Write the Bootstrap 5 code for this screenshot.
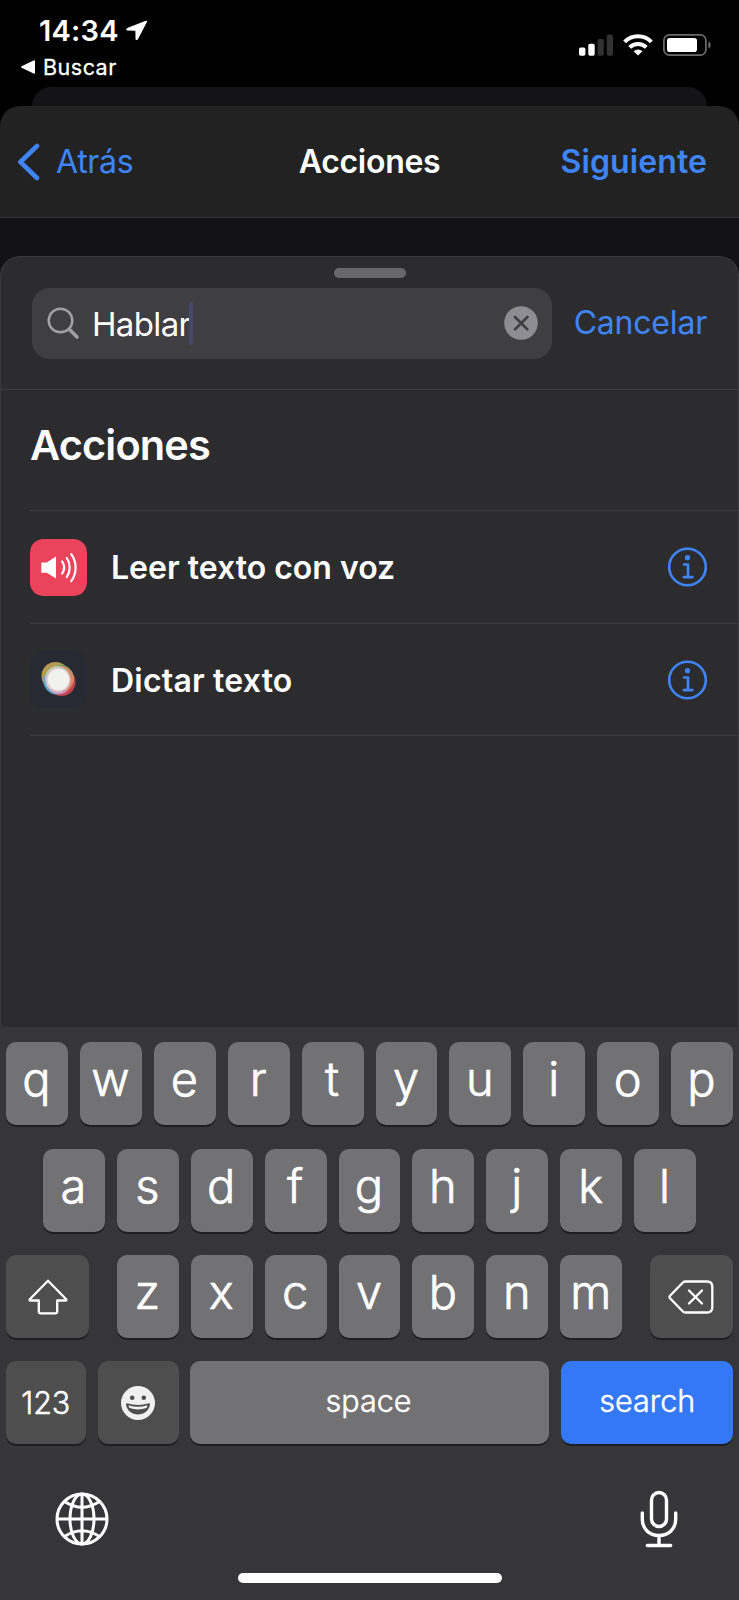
<!DOCTYPE html>
<html lang="es" data-bs-theme="dark">
<head>
<meta charset="utf-8">
<meta name="viewport" content="width=device-width, initial-scale=1">
<title>Acciones</title>
<link rel="stylesheet" href="https://cdn.jsdelivr.net/npm/bootstrap@5.3.0/dist/css/bootstrap.min.css">
<style>
body{background:#000;color:#fff;font-family:Inter,"Liberation Sans",sans-serif;line-height:1}
.phone{width:739px;height:1600px;overflow:hidden}
svg{display:block;flex:none}
.blue{color:#3f85f6}
.statusbar{height:87px;padding:16px 28px 0 21px}
.clock{font-size:29px;font-weight:600;line-height:30px;padding-left:18px;gap:7px;letter-spacing:.25px}
.return-app{font-size:21.500px;font-weight:400;line-height:26px;margin-top:8px;gap:8px;letter-spacing:.5px;-webkit-text-stroke:.3px #fff}
.signals{padding-top:18px;gap:10px}
.sheet-behind{height:19px;margin:0 32px;background:#141416;border-radius:20px 20px 0 0}
.topnav{height:112px;background:#222223;border-bottom:1px solid #363638;border-radius:20px 20px 0 0;padding:2px 32px 0 17px;font-size:32px}
.topnav .back-label{margin-left:15px;letter-spacing:-.3px}
.topnav .title{letter-spacing:-.3px}
.topnav .next{letter-spacing:.1px}
.shade{background:#121214;padding-top:38px}
.sheet{height:771px;background:#2c2c2e;border:1px solid #3b3b3d;border-bottom:0;border-radius:20px 20px 0 0}
.grabber{width:72px;height:10px;border-radius:5px;background:#68686c;margin:11px auto 10px}
.searchrow{height:102.500px;padding:0 31px;border-bottom:1px solid #3d3d3f}
.field{width:520px;height:71px;border-radius:18px;background:#3f3e43;padding:0 14px 0 15px;font-size:33px}
.query{margin-left:12px;letter-spacing:-.65px;padding-top:2px}
.caret{width:4px;height:43px;border-radius:2px;background:#434a6e;margin-left:-1px}
.cancel{font-size:32px;line-height:70px;letter-spacing:-.2px}
.section-title{height:120px;padding:27px 29px 0;font-size:41.500px;font-weight:600;line-height:56px;margin:0;letter-spacing:-.85px}
.actions{margin-left:29px}
.action{height:112.5px;border-top:1px solid #3d3d3f;padding:1px 30px 0 0;font-size:32px;font-weight:600}
.action span{padding-top:2px}
.actions .action:last-child{border-bottom:1px solid #3d3d3f;height:113.5px;letter-spacing:.2px}
.tile{width:57px;height:57px;border-radius:13px;margin-right:24px}
.keyboard{height:574px;background:#363638;padding:15.500px 6px 0}
.keyrow{height:83px;margin-bottom:23.4px;gap:12px}
.key{width:61.9px;height:83px;border-radius:10px;background:#727274;box-shadow:0 2px 0 #1e1e20;font-size:47px;font-weight:300;padding:0 1px 10px 0;-webkit-text-stroke:.7px #fff}
.key.mod{background:#4e4e4e;padding:0}
.key.txt{font-size:30.500px;font-weight:300;padding-bottom:4px;-webkit-text-stroke:.5px #fff}
.key.mod.txt{padding-bottom:0}
.key.txt.go{background:#3478f6;padding-left:2px}
.home{width:264px;height:10px;border-radius:5px;background:#fff;margin:25px auto 0}
</style>
<script src="https://cdn.jsdelivr.net/npm/bootstrap@5.3.0/dist/js/bootstrap.bundle.min.js"></script>
</head>
<body>
<main class="phone d-flex flex-column">
  <header class="statusbar d-flex justify-content-between align-items-start">
    <div>
      <div class="clock d-flex align-items-center"><span>14:34</span>
        <svg width="22" height="22" viewBox="0 0 22 22" fill="#fff"><path d="M19.800.8 1.300 8c-1.500.7-1.300 2.600.3 2.600l7.800.1.100 8c0 1.700 2 1.900 2.600.3L20.900 2c.3-.8-.3-1.500-1.100-1.200z"/></svg>
      </div>
      <div class="return-app d-flex align-items-center">
        <svg width="14" height="14" viewBox="0 0 14 14" fill="#fff"><path d="M.6 6.300 12.600.4c.7-.3 1.400 0 1.400.7v11.800c0 .7-.7 1-1.400.7L.6 7.700c-.7-.4-.7-1 0-1.400z"/></svg>
        <span>Buscar</span></div>
    </div>
    <div class="signals d-flex align-items-center">
      <svg width="34" height="22" viewBox="0 0 34 22"><g fill="#fff"><rect x="0" y="13.500" width="6.400" height="8.300" rx="1.700"/><rect x="9.300" y="9.800" width="6.400" height="12" rx="1.700"/></g><g fill="#323232"><rect x="18.600" y="5" width="6.200" height="16.800" rx="1.700"/><rect x="27.800" y=".6" width="6.200" height="21.200" rx="1.700"/></g></svg>
      <svg width="30" height="22" viewBox="0 0 30 22" fill="none" stroke="#fff" stroke-width="4"><path d="M1.600 7.900a19 19 0 0 1 26.800 0"/><path d="M6.700 13.400a11.700 11.700 0 0 1 16.600 0"/><path d="M15 21.600 10.600 17.300a6.200 6.200 0 0 1 8.800 0z" fill="#fff" stroke="none"/></svg>
      <svg width="48" height="22" viewBox="0 0 48 22"><rect x=".9" y=".9" width="42" height="20.200" rx="5.500" fill="none" stroke="#6b6b6b" stroke-width="1.700"/><rect x="4" y="4" width="30" height="14" rx="2.800" fill="#fff"/><path d="M45.300 7.400c3.200 1.300 3.200 6 0 7.200z" fill="#6b6b6b"/></svg>
    </div>
  </header>
  <div class="sheet-behind"></div>
  <nav class="topnav d-flex align-items-center justify-content-between position-relative">
    <div class="d-flex align-items-center blue">
      <svg width="24" height="38" viewBox="0 0 24 38" fill="none" stroke="#3f85f6" stroke-width="4.600" stroke-linecap="round" stroke-linejoin="round"><path d="M20 3 3.400 19 20 35"/></svg>
      <span class="back-label">Atrás</span></div>
    <div class="title fw-semibold position-absolute start-50 translate-middle-x">Acciones</div>
    <div class="next blue fw-semibold">Siguiente</div>
  </nav>
  <div class="shade">
    <section class="sheet">
      <div class="grabber"></div>
      <div class="searchrow d-flex align-items-start">
        <div class="field d-flex align-items-center">
          <svg width="33" height="33" viewBox="0 0 33 33" fill="none" stroke="#a09fa6" stroke-linecap="round"><circle cx="13.500" cy="13.500" r="11.800" stroke-width="2.500"/><path d="M22.300 22.300 30 30" stroke-width="3.600"/></svg>
          <span class="query">Hablar</span><span class="caret"></span>
          <svg class="ms-auto" width="34" height="34" viewBox="0 0 34 34"><circle cx="17" cy="17" r="16.800" fill="#8e8d93"/><path d="m11 11 12.400 12.400m0-12.400L11 23.400" stroke="#3f3e43" stroke-width="2.700" stroke-linecap="round"/></svg>
        </div>
        <span class="blue ms-auto cancel">Cancelar</span>
      </div>
      <h1 class="section-title">Acciones</h1>
      <div class="actions">
        <div class="action d-flex align-items-center">
          <svg class="tile" viewBox="0 0 57 57"><rect width="57" height="57" rx="13" fill="#ea435b"/><path d="M11.300 23.400h5.500L26 17.600v21.800l-9.200-5.600h-5.500z" fill="#fff"/><g fill="none" stroke="#fff" stroke-width="2.200" stroke-linecap="round"><path d="M32.200 22.500a11 11 0 0 1 0 12"/><path d="M36.800 19a17 17 0 0 1 0 19"/><path d="M41.200 15.200a23 23 0 0 1 0 27"/></g></svg>
          <span>Leer texto con voz</span>
          <svg class="ms-auto" width="40" height="40" viewBox="0 0 40 40" fill="none" stroke="#3f85f6" stroke-linecap="round" stroke-linejoin="round"><circle cx="19.500" cy="20" r="18.300" stroke-width="2.600"/><path d="M16 17.500h4v12.600M15.800 30.100h8.600" stroke-width="2.600"/><circle cx="19.500" cy="10.700" r="2.600" fill="#3f85f6" stroke="none"/></svg>
        </div>
        <div class="action d-flex align-items-center">
          <svg class="tile" viewBox="0 0 57 57"><rect width="57" height="57" rx="13" fill="#282a33"/><circle cx="25.500" cy="25" r="14" fill="#b59a52"/><circle cx="31.500" cy="31" r="14" fill="#c4434c"/><circle cx="31" cy="26.500" r="12.500" fill="#5fa266"/><circle cx="27" cy="30" r="13.500" fill="#5ba9cc"/><circle cx="29" cy="31.200" r="12" fill="#c994c8"/><circle cx="30.800" cy="28" r="13" fill="#d98b62"/><circle cx="27.300" cy="27" r="12" fill="#b9cfae"/><circle cx="28" cy="29" r="12.500" fill="#dcc3cd"/><circle cx="28.500" cy="28.500" r="10.800" fill="#f1f2f0"/></svg>
          <span>Dictar texto</span>
          <svg class="ms-auto" width="40" height="40" viewBox="0 0 40 40" fill="none" stroke="#3f85f6" stroke-linecap="round" stroke-linejoin="round"><circle cx="19.500" cy="20" r="18.300" stroke-width="2.600"/><path d="M16 17.500h4v12.600M15.800 30.100h8.600" stroke-width="2.600"/><circle cx="19.500" cy="10.700" r="2.600" fill="#3f85f6" stroke="none"/></svg>
        </div>
      </div>
    </section>
  </div>
  <section class="keyboard">
    <div class="keyrow d-flex justify-content-center" data-keys="qwertyuiop"></div>
    <div class="keyrow d-flex justify-content-center" data-keys="asdfghjkl"></div>
    <div class="keyrow d-flex justify-content-between">
      <div class="key mod d-flex align-items-center justify-content-center" style="width:83px"><svg width="40" height="36" viewBox="0 0 40 36" fill="none" stroke="#fff" stroke-width="2.300" stroke-linejoin="round"><path d="M20 1.800 1.800 20.300q-.7 1.200.7 1.200h8.300v11q0 1.800 1.800 1.800h14.800q1.800 0 1.800-1.800v-11h8.300q1.400 0 .7-1.200z"/></svg></div>
      <div class="keyrow d-flex m-0" data-keys="zxcvbnm"></div>
      <div class="key mod d-flex align-items-center justify-content-center" style="width:83px"><svg width="46" height="34" viewBox="0 0 46 34" fill="none" stroke="#fff" stroke-width="2.300" stroke-linejoin="round" stroke-linecap="round"><path d="M17.500 1.500H39q5.300 0 5.300 5.300v20.400q0 5.300-5.300 5.300H17.500q-1.500 0-2.600-1L2 18.200q-1-1.200 0-2.400L14.900 2.500q1.100-1 2.600-1z"/><path d="m21 10.500 13 13m0-13-13 13"/></svg></div>
    </div>
    <div class="keyrow d-flex">
      <div class="key mod txt d-flex align-items-center justify-content-center" style="width:79.500px">123</div>
      <div class="key mod d-flex align-items-center justify-content-center" style="width:81.500px"><svg width="34" height="34" viewBox="0 0 34 34"><circle cx="17" cy="17" r="17" fill="#f0f0f0"/><g fill="#4e4e4e"><circle cx="11.200" cy="11.700" r="2.300"/><circle cx="22.800" cy="11.700" r="2.300"/><path d="M6 17.300q11 3.400 22 0c1 0 1.100.8.9 1.700C27.500 25 23 28.500 17 28.500S6.500 25 5.100 19c-.2-.9-.1-1.700.9-1.700z"/></g><path d="M7.500 19.300q9.500 3 19 0-.3 1.800-1 2.800-8.500 2.600-17 0-.8-1-1-2.800z" fill="#f0f0f0"/></svg></div>
      <div class="key txt d-flex align-items-center justify-content-center" style="width:359px;margin-left:-1.500px">space</div>
      <div class="key txt go d-flex align-items-center justify-content-center" style="width:172.500px">search</div>
    </div>
    <div class="d-flex justify-content-between align-items-center" style="height:58px;margin-top:46px;padding:0 55px 0 48.500px">
      <svg width="54" height="54" viewBox="0 0 54 54" fill="none" stroke="#fff" stroke-width="3"><circle cx="27" cy="27" r="25"/><ellipse cx="27" cy="27" rx="12" ry="25"/><path d="M27 2v50M2 27h50M9.500 9.500q17.500 11.500 35 0M9.500 44.500q17.500-11.500 35 0"/></svg>
      <svg width="38" height="58" viewBox="0 0 38 58" fill="none" stroke="#fff" stroke-width="3.400" stroke-linecap="round"><rect x="11.500" y="2.500" width="15" height="34" rx="7.500"/><path d="M2.300 23v6c0 10 7 16.500 16.700 16.500S35.700 39 35.700 29v-6M19 46v9M7.300 55.500h23.400"/></svg>
    </div>
    <div class="home"></div>
  </section>
</main>
<script>
document.querySelectorAll('[data-keys]').forEach(function(row){
  row.dataset.keys.split('').forEach(function(c){
    var k=document.createElement('div');k.className='key d-flex align-items-center justify-content-center';
    k.textContent=c;row.appendChild(k);
  });
});
</script>
</body>
</html>
